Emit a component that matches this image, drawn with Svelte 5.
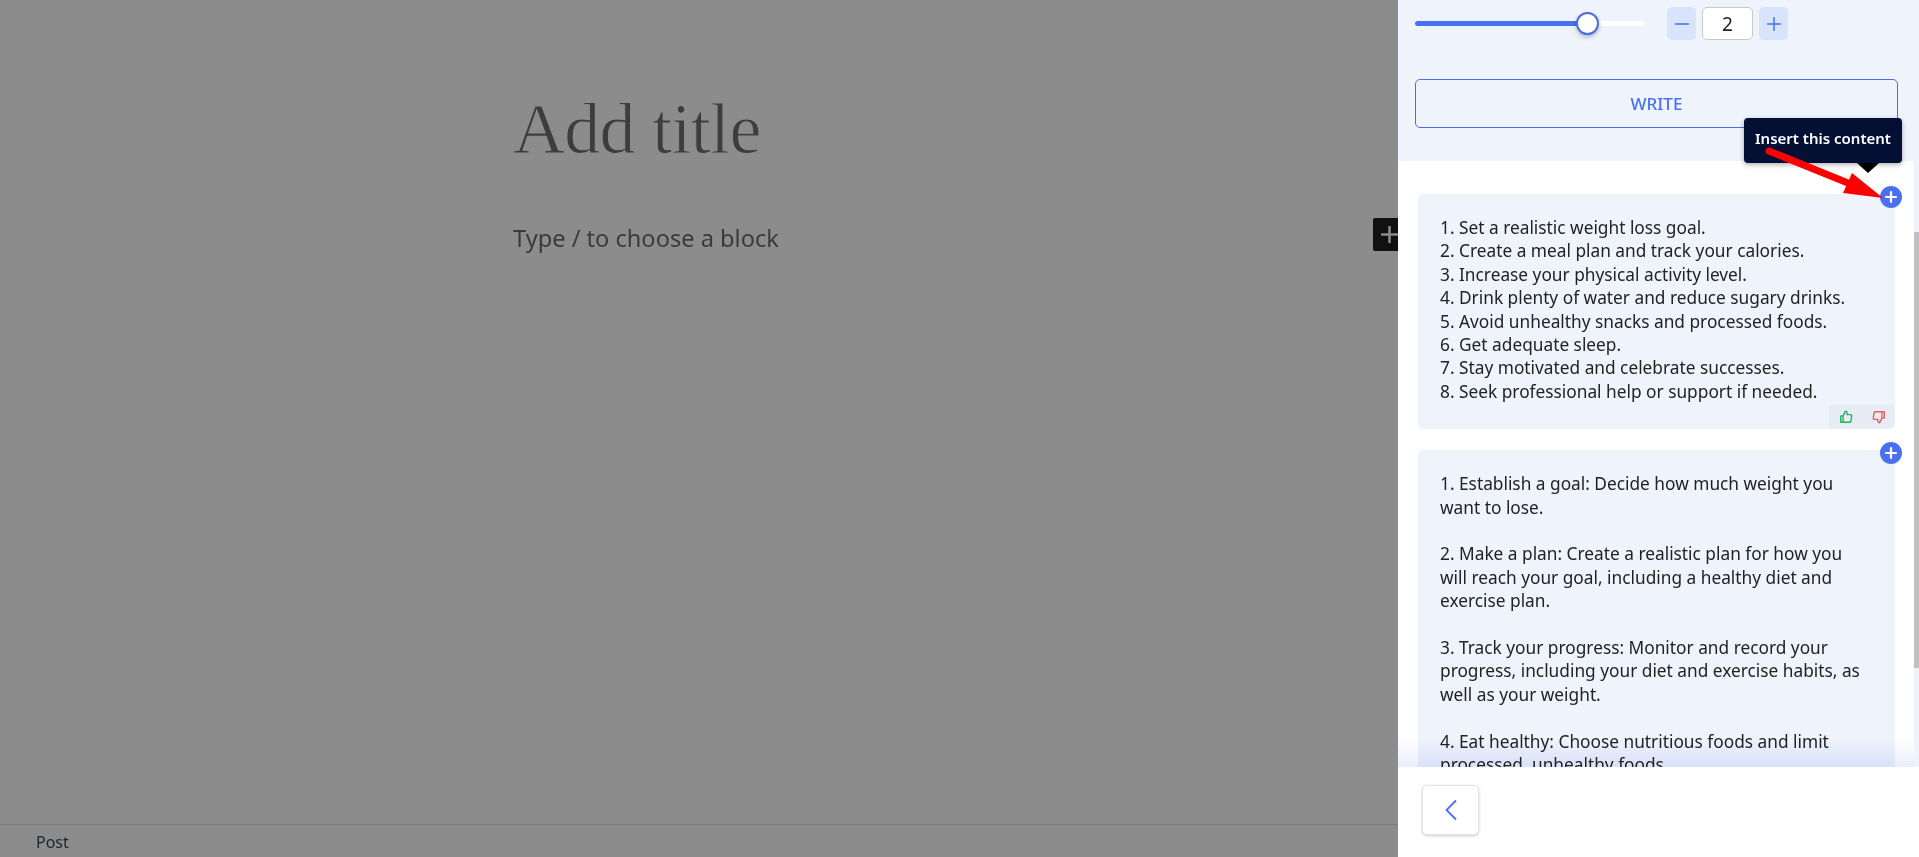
<script>
  const firstList = [
    "1. Set a realistic weight loss goal.",
    "2. Create a meal plan and track your calories.",
    "3. Increase your physical activity level.",
    "4. Drink plenty of water and reduce sugary drinks.",
    "5. Avoid unhealthy snacks and processed foods.",
    "6. Get adequate sleep.",
    "7. Stay motivated and celebrate successes.",
    "8. Seek professional help or support if needed."
  ];

  const secondList = [
    "1. Establish a goal: Decide how much weight you want to lose.",
    "2. Make a plan: Create a realistic plan for how you will reach your goal, including a healthy diet and exercise plan.",
    "3. Track your progress: Monitor and record your progress, including your diet and exercise habits, as well as your weight.",
    "4. Eat healthy: Choose nutritious foods and limit processed, unhealthy foods."
  ];
</script>

<div class="page">
  <main class="editor">
    <div class="canvas">
      <h1 class="title">Add title</h1>
      <p class="placeholder">Type / to choose a block</p>
      <div class="inserter">
        <svg width="17" height="17" viewBox="0 0 17 17"><path d="M0 8.500h17M8.500 0v17" stroke="#8a8a8a" stroke-width="2.500" /></svg>
      </div>
    </div>
    <footer class="status">Post</footer>
  </main>

  <aside class="panel">
    <section class="settings">
      <div class="controls">
        <div class="slider">
          <div class="fill"></div>
          <div class="thumb"></div>
        </div>
        <div class="stepper">
          <button class="step" aria-label="Less">
            <svg width="14" height="14" viewBox="0 0 14 14"><path d="M0 7h14" stroke="#4a6ff0" stroke-width="1.500" /></svg>
          </button>
          <div class="count">2</div>
          <button class="step" aria-label="More">
            <svg width="14" height="14" viewBox="0 0 14 14"><path d="M0 7h14M7 0v14" stroke="#4a6ff0" stroke-width="1.500" /></svg>
          </button>
        </div>
      </div>
      <button class="write">WRITE</button>
    </section>

    <section class="results">
      <div class="scroller">
        <article class="card">
          <button class="add" aria-label="Insert">
            <svg width="14" height="14" viewBox="0 0 14 14"><path d="M2 7h10M7 2v10" stroke="#fff" stroke-width="2.200" stroke-linecap="round" /></svg>
          </button>
          <div class="lines">
            {#each firstList as line}
              <div>{line}</div>
            {/each}
          </div>
          <div class="rating">
            <svg width="14" height="14" viewBox="0 0 24 24" fill="none" stroke="#22b35e" stroke-width="2.400" stroke-linejoin="round"><path d="M7 10v11H3V10zM7 10l4-8c2 0 3 1.500 3 3v3h6c1 0 2 1 1.800 2.300l-1.500 9c-.2 1-1 1.700-2 1.700H7" /></svg>
            <svg width="14" height="14" viewBox="0 0 24 24" fill="none" stroke="#ef5a5a" stroke-width="2.400" stroke-linejoin="round"><path d="M17 14V3h4v11zM17 14l-4 8c-2 0-3-1.500-3-3v-3H4c-1 0-2-1-1.800-2.300l1.500-9c.2-1 1-1.700 2-1.700H17" /></svg>
          </div>
        </article>

        <article class="card">
          <button class="add" aria-label="Insert">
            <svg width="14" height="14" viewBox="0 0 14 14"><path d="M2 7h10M7 2v10" stroke="#fff" stroke-width="2.200" stroke-linecap="round" /></svg>
          </button>
          <div class="lines spaced">
            {#each secondList as para}
              <p>{para}</p>
            {/each}
          </div>
        </article>
      </div>
      <div class="fade"></div>
      <div class="track"><div class="bar"></div></div>
    </section>

    <footer class="actions">
      <button class="back" aria-label="Back">
        <svg width="14" height="22" viewBox="0 0 14 22" fill="none"><path d="M12 1.500 2.500 11l9.500 9.500" stroke="#4a6ff0" stroke-width="1.800" /></svg>
      </button>
    </footer>

    <div class="tooltip">
      Insert this content
      <span class="tip"></span>
    </div>

    <svg class="pointer" width="130" height="60" viewBox="0 0 130 60">
      <path d="M9 6 88 38" stroke="#f00" stroke-width="7" stroke-linecap="round" />
      <path d="M92 28 L123 53 L83 48 Z" fill="#f00" />
    </svg>
  </aside>
</div>

<style>
  :global(body) {
    margin: 0;
    overflow: hidden;
  }

  .page {
    display: flex;
    height: 857px;
    font-family: "Noto Sans", "Open Sans", sans-serif;
  }

  .editor {
    flex: 1;
    display: flex;
    flex-direction: column;
    background: #8c8c8c;
    min-width: 0;
  }

  .canvas {
    flex: 1;
    position: relative;
    padding: 87px 0 0 513px;
  }

  .title {
    margin: 0;
    font-family: "Liberation Serif", serif;
    font-size: 72px;
    font-weight: 400;
    letter-spacing: -0.7px;
    line-height: 84px;
    color: #3d3d3d;
    -webkit-text-stroke: 1px #8c8c8c;
  }

  .placeholder {
    margin: 49px 0 0;
    font-size: 23.600px;
    line-height: 36px;
    color: #3b3b3b;
  }

  .inserter {
    position: absolute;
    top: 218px;
    right: 0;
    width: 25px;
    height: 33px;
    box-sizing: border-box;
    padding-left: 8px;
    display: flex;
    align-items: center;
    background: #111;
    border-radius: 2px 0 0 2px;
  }

  .status {
    height: 32px;
    border-top: 1px solid #7c7c7c;
    padding-left: 36px;
    font-size: 16px;
    line-height: 35px;
    color: #1e2433;
  }

  .panel {
    width: 521px;
    flex: none;
    position: relative;
    display: flex;
    flex-direction: column;
    background: #fff;
  }

  .settings {
    height: 161px;
    box-sizing: border-box;
    padding: 7px 21px 0 17px;
    background: #eef3fc;
  }

  .controls {
    display: flex;
    align-items: center;
    gap: 22px;
  }

  .slider {
    width: 230px;
    height: 5px;
    position: relative;
    border-radius: 3px;
    background: #fff;
  }

  .fill {
    width: 170px;
    height: 100%;
    border-radius: 3px;
    background: #4a6ff0;
  }

  .thumb {
    position: absolute;
    left: 161px;
    top: -9px;
    width: 19px;
    height: 19px;
    border: 2px solid #4a6ee0;
    border-radius: 50%;
    background: #fff;
    box-shadow: 0 2px 4px rgba(0, 0, 0, 0.25);
  }

  .stepper {
    display: flex;
    align-items: center;
    gap: 6px;
  }

  .step {
    width: 29px;
    height: 33px;
    padding: 0;
    display: flex;
    align-items: center;
    justify-content: center;
    border: 0;
    border-radius: 5px;
    background: #d8e4fc;
  }

  .count {
    width: 49px;
    height: 31px;
    border: 1px solid #c9c9c9;
    border-radius: 5px;
    background: #fff;
    text-align: center;
    font-size: 19px;
    line-height: 33px;
    color: #222;
  }

  .write {
    display: block;
    width: 483px;
    height: 49px;
    margin-top: 39px;
    border: 1px solid #4a6ee0;
    border-radius: 5px;
    background: transparent;
    font-family: inherit;
    font-size: 17px;
    font-weight: 500;
    color: #4a6ff0;
  }

  .results {
    flex: 1;
    position: relative;
    min-height: 0;
    overflow: hidden;
  }

  .scroller {
    padding: 33px 0 0 20px;
  }

  .card {
    width: 477px;
    position: relative;
    box-sizing: border-box;
    margin-bottom: 21px;
    padding: 22px 22px 26px;
    border-radius: 6px;
    background: #eef3fc;
    font-size: 17.300px;
    line-height: 23.400px;
    color: #222;
  }

  .spaced p {
    margin: 0 0 23.400px;
  }

  .add {
    position: absolute;
    top: -8px;
    right: -7px;
    width: 22px;
    height: 22px;
    padding: 0;
    display: flex;
    align-items: center;
    justify-content: center;
    border: 0;
    border-radius: 50%;
    background: #4a6ff0;
  }

  .rating {
    position: absolute;
    right: 0;
    bottom: 0;
    width: 66px;
    height: 24px;
    display: flex;
    align-items: center;
    justify-content: center;
    gap: 19px;
    border-radius: 0 0 6px 0;
    background: #e8ecf4;
  }

  .track {
    position: absolute;
    top: 0;
    bottom: 0;
    right: 0;
    width: 5px;
    background: #eef3fc;
  }

  .bar {
    position: absolute;
    top: 71px;
    height: 436px;
    width: 5px;
    background: #c1c1c1;
  }

  .fade {
    position: absolute;
    left: 0;
    right: 0;
    bottom: 0;
    height: 28px;
    background: linear-gradient(to bottom, #fff, #e8edf9);
    mix-blend-mode: multiply;
  }

  .actions {
    height: 90px;
    box-sizing: border-box;
    padding: 18px 0 0 24px;
    background: #fff;
  }

  .back {
    width: 57px;
    height: 50px;
    padding: 0;
    display: flex;
    align-items: center;
    justify-content: center;
    border: 1px solid #e4e4e4;
    border-radius: 5px;
    background: #fff;
    box-shadow: 0 1px 3px rgba(0, 0, 0, 0.2);
  }

  .tooltip {
    position: absolute;
    top: 118px;
    left: 346px;
    width: 158px;
    height: 45px;
    box-sizing: border-box;
    text-align: center;
    border-radius: 4px;
    background: #031033;
    font-size: 15px;
    font-weight: 600;
    line-height: 40px;
    color: #fff;
    white-space: nowrap;
    box-shadow: 0 2px 5px rgba(0, 0, 0, 0.3);
  }

  .tip {
    position: absolute;
    top: 45px;
    left: 113px;
    width: 0;
    height: 0;
    border-left: 11px solid transparent;
    border-right: 11px solid transparent;
    border-top: 10px solid #000;
  }

  .pointer {
    position: absolute;
    top: 145px;
    left: 362px;
  }
</style>
